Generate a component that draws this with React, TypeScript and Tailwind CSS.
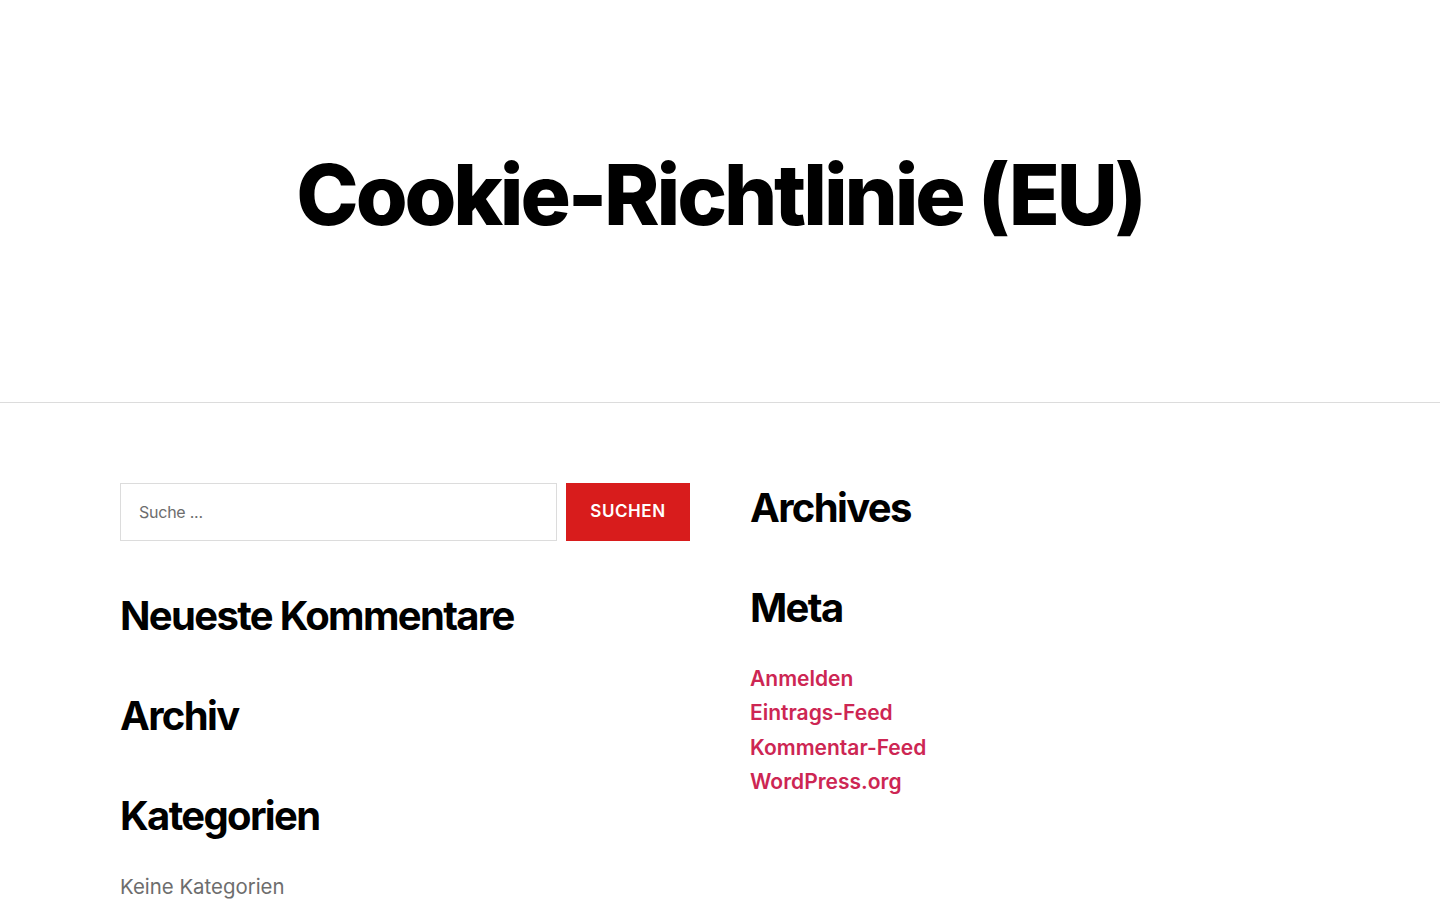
/**
 * Cookie-Richtlinie (EU) — Seitenkopf mit Titel und Footer-Widgets
 * (Suche, Neueste Kommentare, Archiv, Kategorien / Archives, Meta).
 */

const META_LINKS = ["Anmelden", "Eintrags-Feed", "Kommentar-Feed", "WordPress.org"];

function WidgetTitle({ children }: { children: React.ReactNode }) {
  return (
    <h2 className="text-[40px] font-bold leading-[50px] tracking-[-0.0415625em] text-black">
      {children}
    </h2>
  );
}

function SearchForm() {
  return (
    <form className="flex gap-[9px]" onSubmit={(e) => e.preventDefault()}>
      <input
        type="search"
        placeholder="Suche ..."
        className="h-[58px] w-[437px] border border-[#dcdcdc] bg-white px-[18px] text-[16px] tracking-[-0.015em] text-black outline-none placeholder:text-[#6d6d6d]"
      />
      <button
        type="submit"
        className="h-[58px] w-[124px] bg-[#d81c1c] text-[17px] font-semibold uppercase tracking-[0.0333em] text-white"
      >
        Suchen
      </button>
    </form>
  );
}

export default function App() {
  return (
    <div className="min-h-screen bg-white font-['Inter','Noto_Sans',sans-serif] text-black">
      <header className="border-b border-[#dcdcdc] pt-[147px] pb-[159px]">
        <h1 className="text-center text-[84px] font-extrabold leading-[1.138] tracking-[-0.038em]">
          Cookie-Richtlinie (EU)
        </h1>
      </header>

      <footer className="mx-auto grid max-w-[1200px] grid-cols-2 gap-[60px] pt-[80px]">
        <div className="flex flex-col gap-[50px]">
          <SearchForm />
          <WidgetTitle>Neueste Kommentare</WidgetTitle>
          <WidgetTitle>Archiv</WidgetTitle>
          <div>
            <WidgetTitle>Kategorien</WidgetTitle>
            <p className="mt-[29px] text-[20.4px] leading-[34px] text-[#6d6d6d]">
              Keine Kategorien
            </p>
          </div>
        </div>

        <div className="flex flex-col gap-[50px]">
          <WidgetTitle>Archives</WidgetTitle>
          <div>
            <WidgetTitle>Meta</WidgetTitle>
            <ul className="mt-[29px]">
              {META_LINKS.map((label) => (
                <li key={label} className="text-[21px] font-semibold leading-[34.5px]">
                  <a href="#" className="text-[#cd2653]">
                    {label}
                  </a>
                </li>
              ))}
            </ul>
          </div>
        </div>
      </footer>
    </div>
  );
}
